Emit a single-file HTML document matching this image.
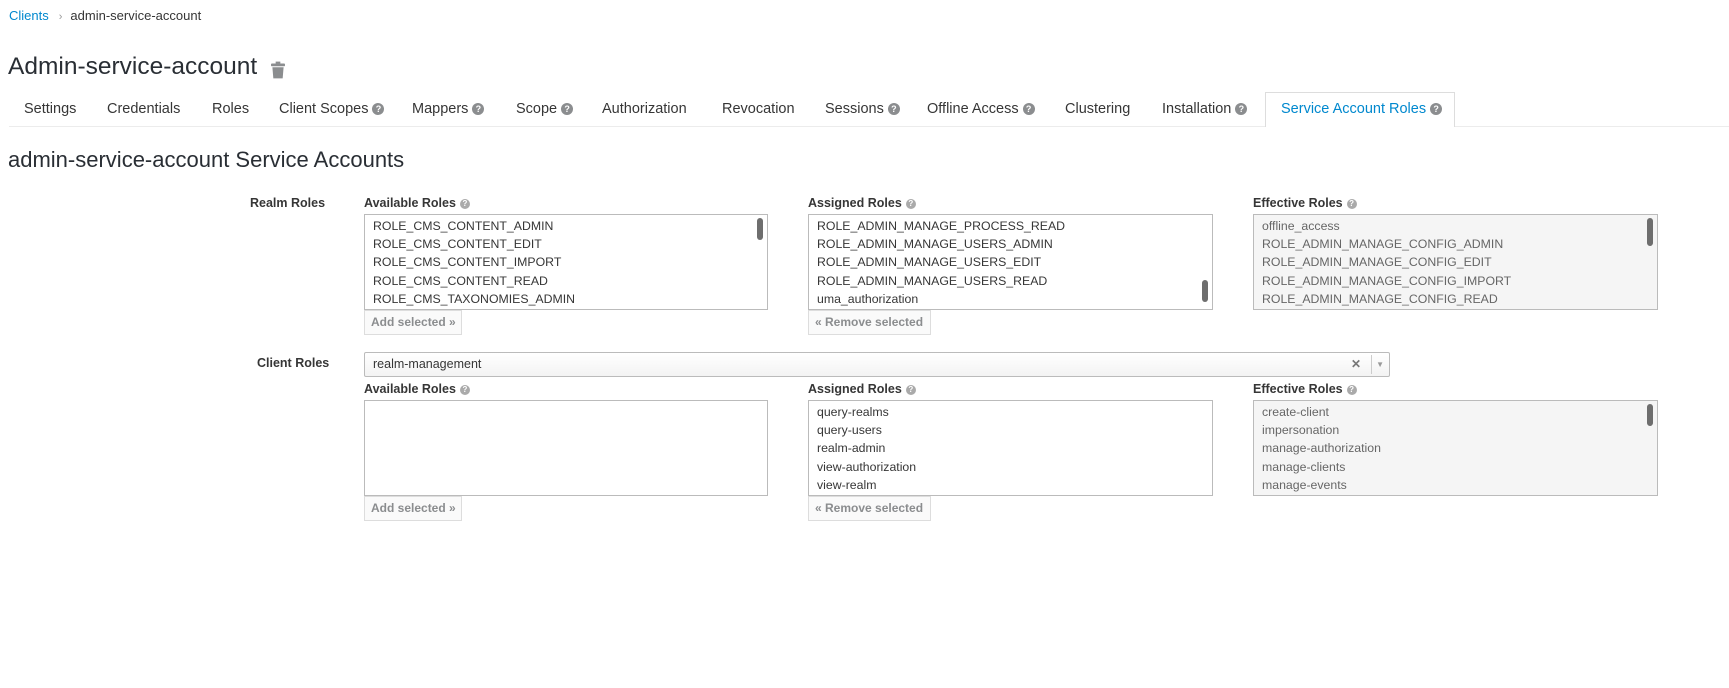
<!DOCTYPE html>
<html><head><meta charset="utf-8"><style>
*{box-sizing:border-box;margin:0;padding:0}
body{width:1729px;height:688px;background:#fff;font-family:"Liberation Sans",sans-serif;color:#363636;position:relative;overflow:hidden}
.a{position:absolute;white-space:nowrap}
.q{display:inline-block;width:12px;height:12px;border-radius:50%;background:#8b8d8f;color:#fff;font-size:9px;font-weight:bold;text-align:center;line-height:12px;vertical-align:1px;margin-left:4px}
.q.s{width:10px;height:10px;line-height:10px;font-size:8px;background:#aaa}
.tab{position:absolute;top:101px;font-size:14.5px;color:#363636;white-space:nowrap}
.lbl{font-size:12.5px;font-weight:bold;color:#363636}
.box{position:absolute;border:1px solid #bbb;background:#fff;font-size:12.3px;color:#363636;padding:2px 0 0 8px;line-height:18.2px;overflow:hidden;white-space:nowrap}
.box.e{background:#f5f5f5;color:#666}
.sb{position:absolute;right:4px;width:6px;height:22px;border-radius:3px;background:#6e6e6e}
.btn{position:absolute;height:25px;border:1px solid #ddd;background:#fafafa;font-size:12px;font-weight:bold;color:#8b8d8f;padding-left:6px;line-height:23px;white-space:nowrap}
</style></head><body>
<div class="a" style="left:9px;top:8px;font-size:13px"><span style="color:#0088ce">Clients</span><span style="color:#999;margin:0 8px 0 10px;font-size:11px">›</span>admin-service-account</div>
<div class="a" style="left:8px;top:53px;font-size:24.5px;color:#292e34">Admin-service-account</div>
<svg class="a" style="left:271px;top:61px" width="14" height="18" viewBox="0 0 15 18"><rect x="5" y="0" width="5" height="2" fill="#8b8d8f"/><rect x="0" y="2" width="15" height="3" rx="1" fill="#8b8d8f"/><path d="M1.5 6h12l-1 12h-10z" fill="#8b8d8f"/></svg>
<div class="a" style="left:9px;top:126px;width:1720px;height:1px;background:#ececec"></div>
<div class="a" style="left:1265px;top:92px;width:190px;height:35px;border:1px solid #ddd;border-bottom:none;background:#fff"></div>
<div class="tab" style="left:24px">Settings</div>
<div class="tab" style="left:107px">Credentials</div>
<div class="tab" style="left:212px">Roles</div>
<div class="tab" style="left:279px">Client Scopes<span class="q">?</span></div>
<div class="tab" style="left:412px">Mappers<span class="q">?</span></div>
<div class="tab" style="left:516px">Scope<span class="q">?</span></div>
<div class="tab" style="left:602px">Authorization</div>
<div class="tab" style="left:722px">Revocation</div>
<div class="tab" style="left:825px">Sessions<span class="q">?</span></div>
<div class="tab" style="left:927px">Offline Access<span class="q">?</span></div>
<div class="tab" style="left:1065px">Clustering</div>
<div class="tab" style="left:1162px">Installation<span class="q">?</span></div>
<div class="tab" style="left:1281px;color:#0088ce">Service Account Roles<span class="q">?</span></div>
<div class="a" style="left:8px;top:147px;font-size:22px;color:#292e34">admin-service-account Service Accounts</div>

<div class="a lbl" style="left:250px;top:196px">Realm Roles</div>
<div class="a lbl" style="left:364px;top:196px">Available Roles<span class="q s">?</span></div>
<div class="a lbl" style="left:808px;top:196px">Assigned Roles<span class="q s">?</span></div>
<div class="a lbl" style="left:1253px;top:196px">Effective Roles<span class="q s">?</span></div>
<div class="box" style="left:364px;top:214px;width:404px;height:96px">ROLE_CMS_CONTENT_ADMIN<br>ROLE_CMS_CONTENT_EDIT<br>ROLE_CMS_CONTENT_IMPORT<br>ROLE_CMS_CONTENT_READ<br>ROLE_CMS_TAXONOMIES_ADMIN<div class="sb" style="top:3px"></div></div>
<div class="box" style="left:808px;top:214px;width:405px;height:96px">ROLE_ADMIN_MANAGE_PROCESS_READ<br>ROLE_ADMIN_MANAGE_USERS_ADMIN<br>ROLE_ADMIN_MANAGE_USERS_EDIT<br>ROLE_ADMIN_MANAGE_USERS_READ<br>uma_authorization<div class="sb" style="top:65px"></div></div>
<div class="box e" style="left:1253px;top:214px;width:405px;height:96px">offline_access<br>ROLE_ADMIN_MANAGE_CONFIG_ADMIN<br>ROLE_ADMIN_MANAGE_CONFIG_EDIT<br>ROLE_ADMIN_MANAGE_CONFIG_IMPORT<br>ROLE_ADMIN_MANAGE_CONFIG_READ<div class="sb" style="top:3px;height:28px"></div></div>
<div class="btn" style="left:364px;top:310px;width:98px">Add selected »</div>
<div class="btn" style="left:808px;top:310px;width:123px">« Remove selected</div>

<div class="a lbl" style="left:257px;top:356px">Client Roles</div>
<div class="a" style="left:364px;top:352px;width:1026px;height:25px;border:1px solid #bbb;border-radius:2px;background:linear-gradient(#fff,#f3f3f3);font-size:12.5px;padding:4px 0 0 8px">realm-management
<span class="a" style="right:28px;top:4px;color:#777;font-weight:bold;font-size:12px">✕</span>
<span class="a" style="right:17px;top:2px;width:1px;height:19px;background:#ccc"></span>
<span class="a" style="right:5px;top:7px;color:#999;font-size:8px">▼</span></div>
<div class="a lbl" style="left:364px;top:382px">Available Roles<span class="q s">?</span></div>
<div class="a lbl" style="left:808px;top:382px">Assigned Roles<span class="q s">?</span></div>
<div class="a lbl" style="left:1253px;top:382px">Effective Roles<span class="q s">?</span></div>
<div class="box" style="left:364px;top:400px;width:404px;height:96px"></div>
<div class="box" style="left:808px;top:400px;width:405px;height:96px">query-realms<br>query-users<br>realm-admin<br>view-authorization<br>view-realm</div>
<div class="box e" style="left:1253px;top:400px;width:405px;height:96px">create-client<br>impersonation<br>manage-authorization<br>manage-clients<br>manage-events<div class="sb" style="top:3px"></div></div>
<div class="btn" style="left:364px;top:496px;width:98px">Add selected »</div>
<div class="btn" style="left:808px;top:496px;width:123px">« Remove selected</div>
</body></html>
